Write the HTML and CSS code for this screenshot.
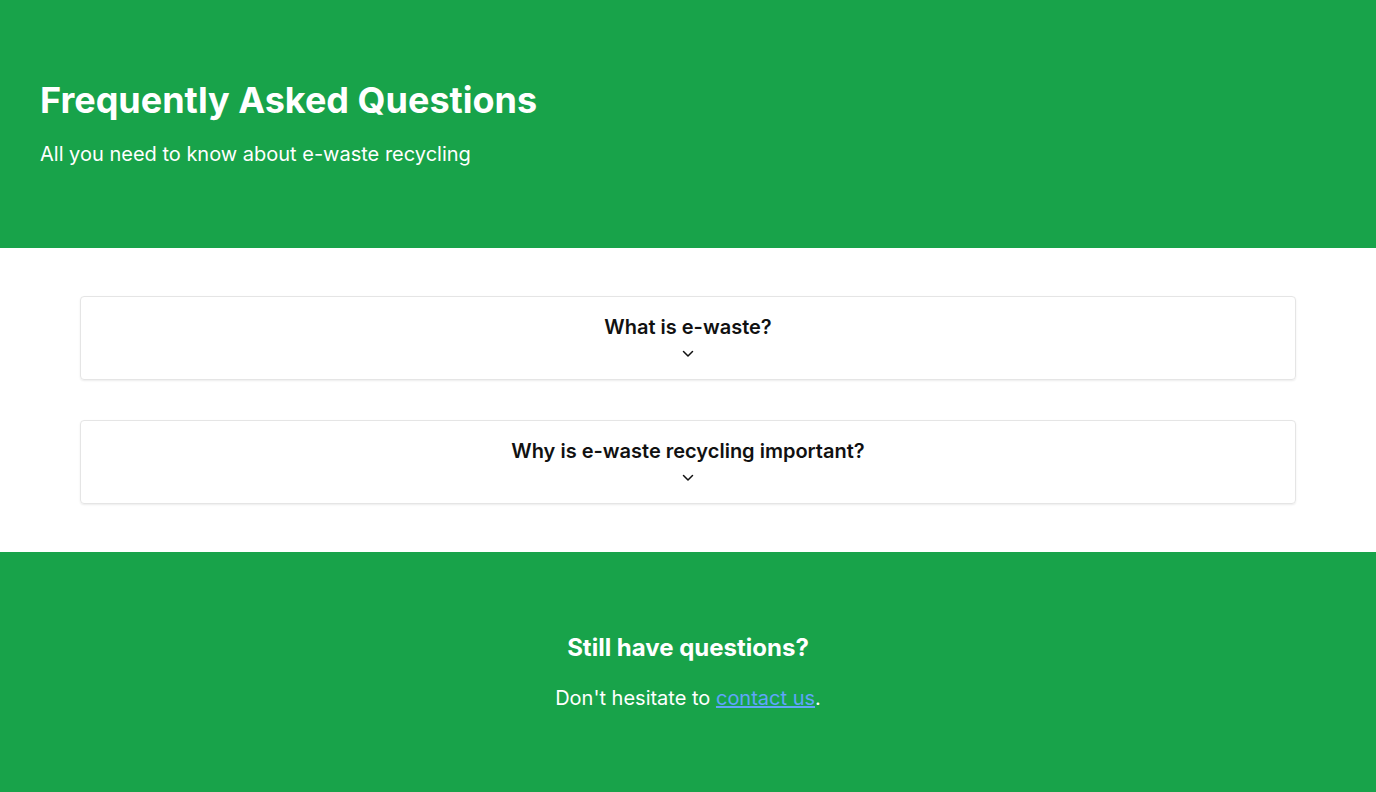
FILE: index.html
```html
<!DOCTYPE html>
<html lang="en">
<head>
<meta charset="utf-8">
<title>FAQ</title>
<link rel="stylesheet" href="styles.css">
</head>
<body>
<header class="hero">
  <h1 class="hero-title">Frequently Asked Questions</h1>
  <p class="hero-sub">All you need to know about e-waste recycling</p>
</header>
<main class="faq">
  <div class="card">
    <h3 class="card-q">What is e-waste?</h3>
    <span class="chev"><svg width="12" height="8" viewBox="0 0 12 8"><path d="M1.5 1.5 L6 6 L10.5 1.5" fill="none" stroke="#111" stroke-width="1.5" stroke-linecap="round" stroke-linejoin="round"/></svg></span>
  </div>
  <div class="card">
    <h3 class="card-q">Why is e-waste recycling important?</h3>
    <span class="chev"><svg width="12" height="8" viewBox="0 0 12 8"><path d="M1.5 1.5 L6 6 L10.5 1.5" fill="none" stroke="#111" stroke-width="1.5" stroke-linecap="round" stroke-linejoin="round"/></svg></span>
  </div>
</main>
<footer class="cta">
  <h2 class="cta-title">Still have questions?</h2>
  <p class="cta-text">Don't hesitate to <a href="#" class="cta-link">contact us</a>.</p>
</footer>
</body>
</html>
```
FILE: styles.css
```css
* { box-sizing: border-box; }
html, body { margin: 0; padding: 0; }
body {
  font-family: Inter, "Noto Sans", sans-serif;
  background: #fff;
  color: #111;
}
.hero {
  background: #18a34a;
  color: #fff;
  padding: 80px 40px;
  display: flex;
  flex-direction: column;
  gap: 20px;
}
.hero-title {
  margin: 0;
  font-size: 36px;
  line-height: 40px;
  font-weight: 700;
}
.hero-sub {
  margin: 0;
  font-size: 20px;
  line-height: 28px;
}
.faq {
  padding: 48px 80px;
  display: flex;
  flex-direction: column;
  gap: 40px;
}
.card {
  border: 1px solid #e5e5e5;
  border-radius: 4px;
  box-shadow: 0 1px 2px rgba(0,0,0,0.08);
  padding: 16px 16px 14px;
  display: flex;
  flex-direction: column;
  align-items: center;
}
.card-q {
  margin: 0;
  font-size: 20px;
  line-height: 28px;
  font-weight: 600;
  color: #111;
}
.chev {
  height: 24px;
  padding-top: 1px;
  display: flex;
  align-items: center;
  justify-content: center;
}
.chev svg { display: block; }
.cta {
  background: #18a34a;
  color: #fff;
  padding: 80px 40px;
  display: flex;
  flex-direction: column;
  align-items: center;
  gap: 20px;
  text-align: center;
}
.cta-title {
  margin: 0;
  font-size: 24px;
  line-height: 32px;
  font-weight: 700;
}
.cta-text {
  margin: 0;
  font-size: 20px;
  line-height: 28px;
}
.cta-link {
  color: #60a5fa;
  text-decoration: underline;
}
```
